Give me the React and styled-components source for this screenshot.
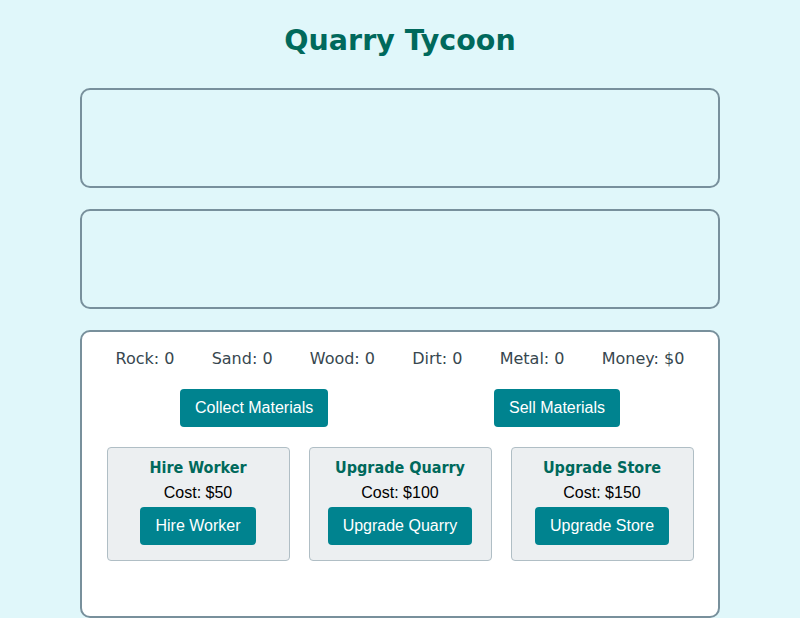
import React from 'react'
import styled, { createGlobalStyle } from 'styled-components'

const GlobalStyle = createGlobalStyle`
  html, body {
    margin: 0;
    background: #e0f7fa;
  }
`

const Page = styled.div`
  padding: 24px 0 0;
  font-family: "DejaVu Sans", Verdana, sans-serif;
`

const Title = styled.h1`
  margin: 0 0 31px;
  text-align: center;
  font-size: 28.5px;
  font-weight: bold;
  color: #00695c;
`

const Stack = styled.div`
  width: 640px;
  margin: 0 auto;
  display: flex;
  flex-direction: column;
  gap: 21px;
`

const Panel = styled.section`
  box-sizing: border-box;
  border: 2px solid #78909c;
  border-radius: 10px;
  background: ${(p) => (p.$white ? '#fff' : 'transparent')};
  height: ${(p) => (p.$white ? 'auto' : '100px')};
  padding: ${(p) => (p.$white ? '17px 15px 55px' : '0')};
`

const Stats = styled.div`
  display: flex;
  justify-content: space-around;
  font-size: 16px;
  color: #37474f;
  line-height: 19px;
`

const Actions = styled.div`
  display: flex;
  justify-content: space-around;
  margin-top: 21px;
`

const Button = styled.button`
  box-sizing: border-box;
  height: 38px;
  font-family: "Liberation Sans", Arial, sans-serif;
  font-size: 16px;
  line-height: 18px;
  padding: 0 15px;
  border: none;
  border-radius: 4px;
  background: #00838f;
  color: #fff;
  cursor: pointer;
`

const Cards = styled.div`
  display: flex;
  justify-content: space-around;
  margin-top: 20px;
`

const Card = styled.div`
  box-sizing: border-box;
  width: 183px;
  padding: 10px 10px 15px;
  border: 1px solid #b0bec5;
  border-radius: 4px;
  background: #eceff1;
  display: flex;
  flex-direction: column;
  align-items: center;
`

const CardTitle = styled.h3`
  margin: 0 0 7px;
  font-family: "DejaVu Sans Condensed", "DejaVu Sans", Verdana, sans-serif;
  font-size: 16px;
  line-height: 19px;
  font-weight: bold;
  color: #00695c;
`

const Cost = styled.p`
  margin: 0 0 5px;
  font-family: "Liberation Sans", Arial, sans-serif;
  font-size: 16px;
  line-height: 18px;
  color: #000;
`

const stats = ['Rock: 0', 'Sand: 0', 'Wood: 0', 'Dirt: 0', 'Metal: 0', 'Money: $0']

const upgrades = [
  { name: 'Hire Worker', cost: 50 },
  { name: 'Upgrade Quarry', cost: 100 },
  { name: 'Upgrade Store', cost: 150 },
]

export default function App() {
  return (
    <Page>
      <GlobalStyle />
      <Title>Quarry Tycoon</Title>
      <Stack>
        <Panel />
        <Panel />
        <Panel $white>
          <Stats>
            {stats.map((s) => (
              <span key={s}>{s}</span>
            ))}
          </Stats>
          <Actions>
            <Button>Collect Materials</Button>
            <Button>Sell Materials</Button>
          </Actions>
          <Cards>
            {upgrades.map((u) => (
              <Card key={u.name}>
                <CardTitle>{u.name}</CardTitle>
                <Cost>Cost: ${u.cost}</Cost>
                <Button>{u.name}</Button>
              </Card>
            ))}
          </Cards>
        </Panel>
      </Stack>
    </Page>
  )
}
